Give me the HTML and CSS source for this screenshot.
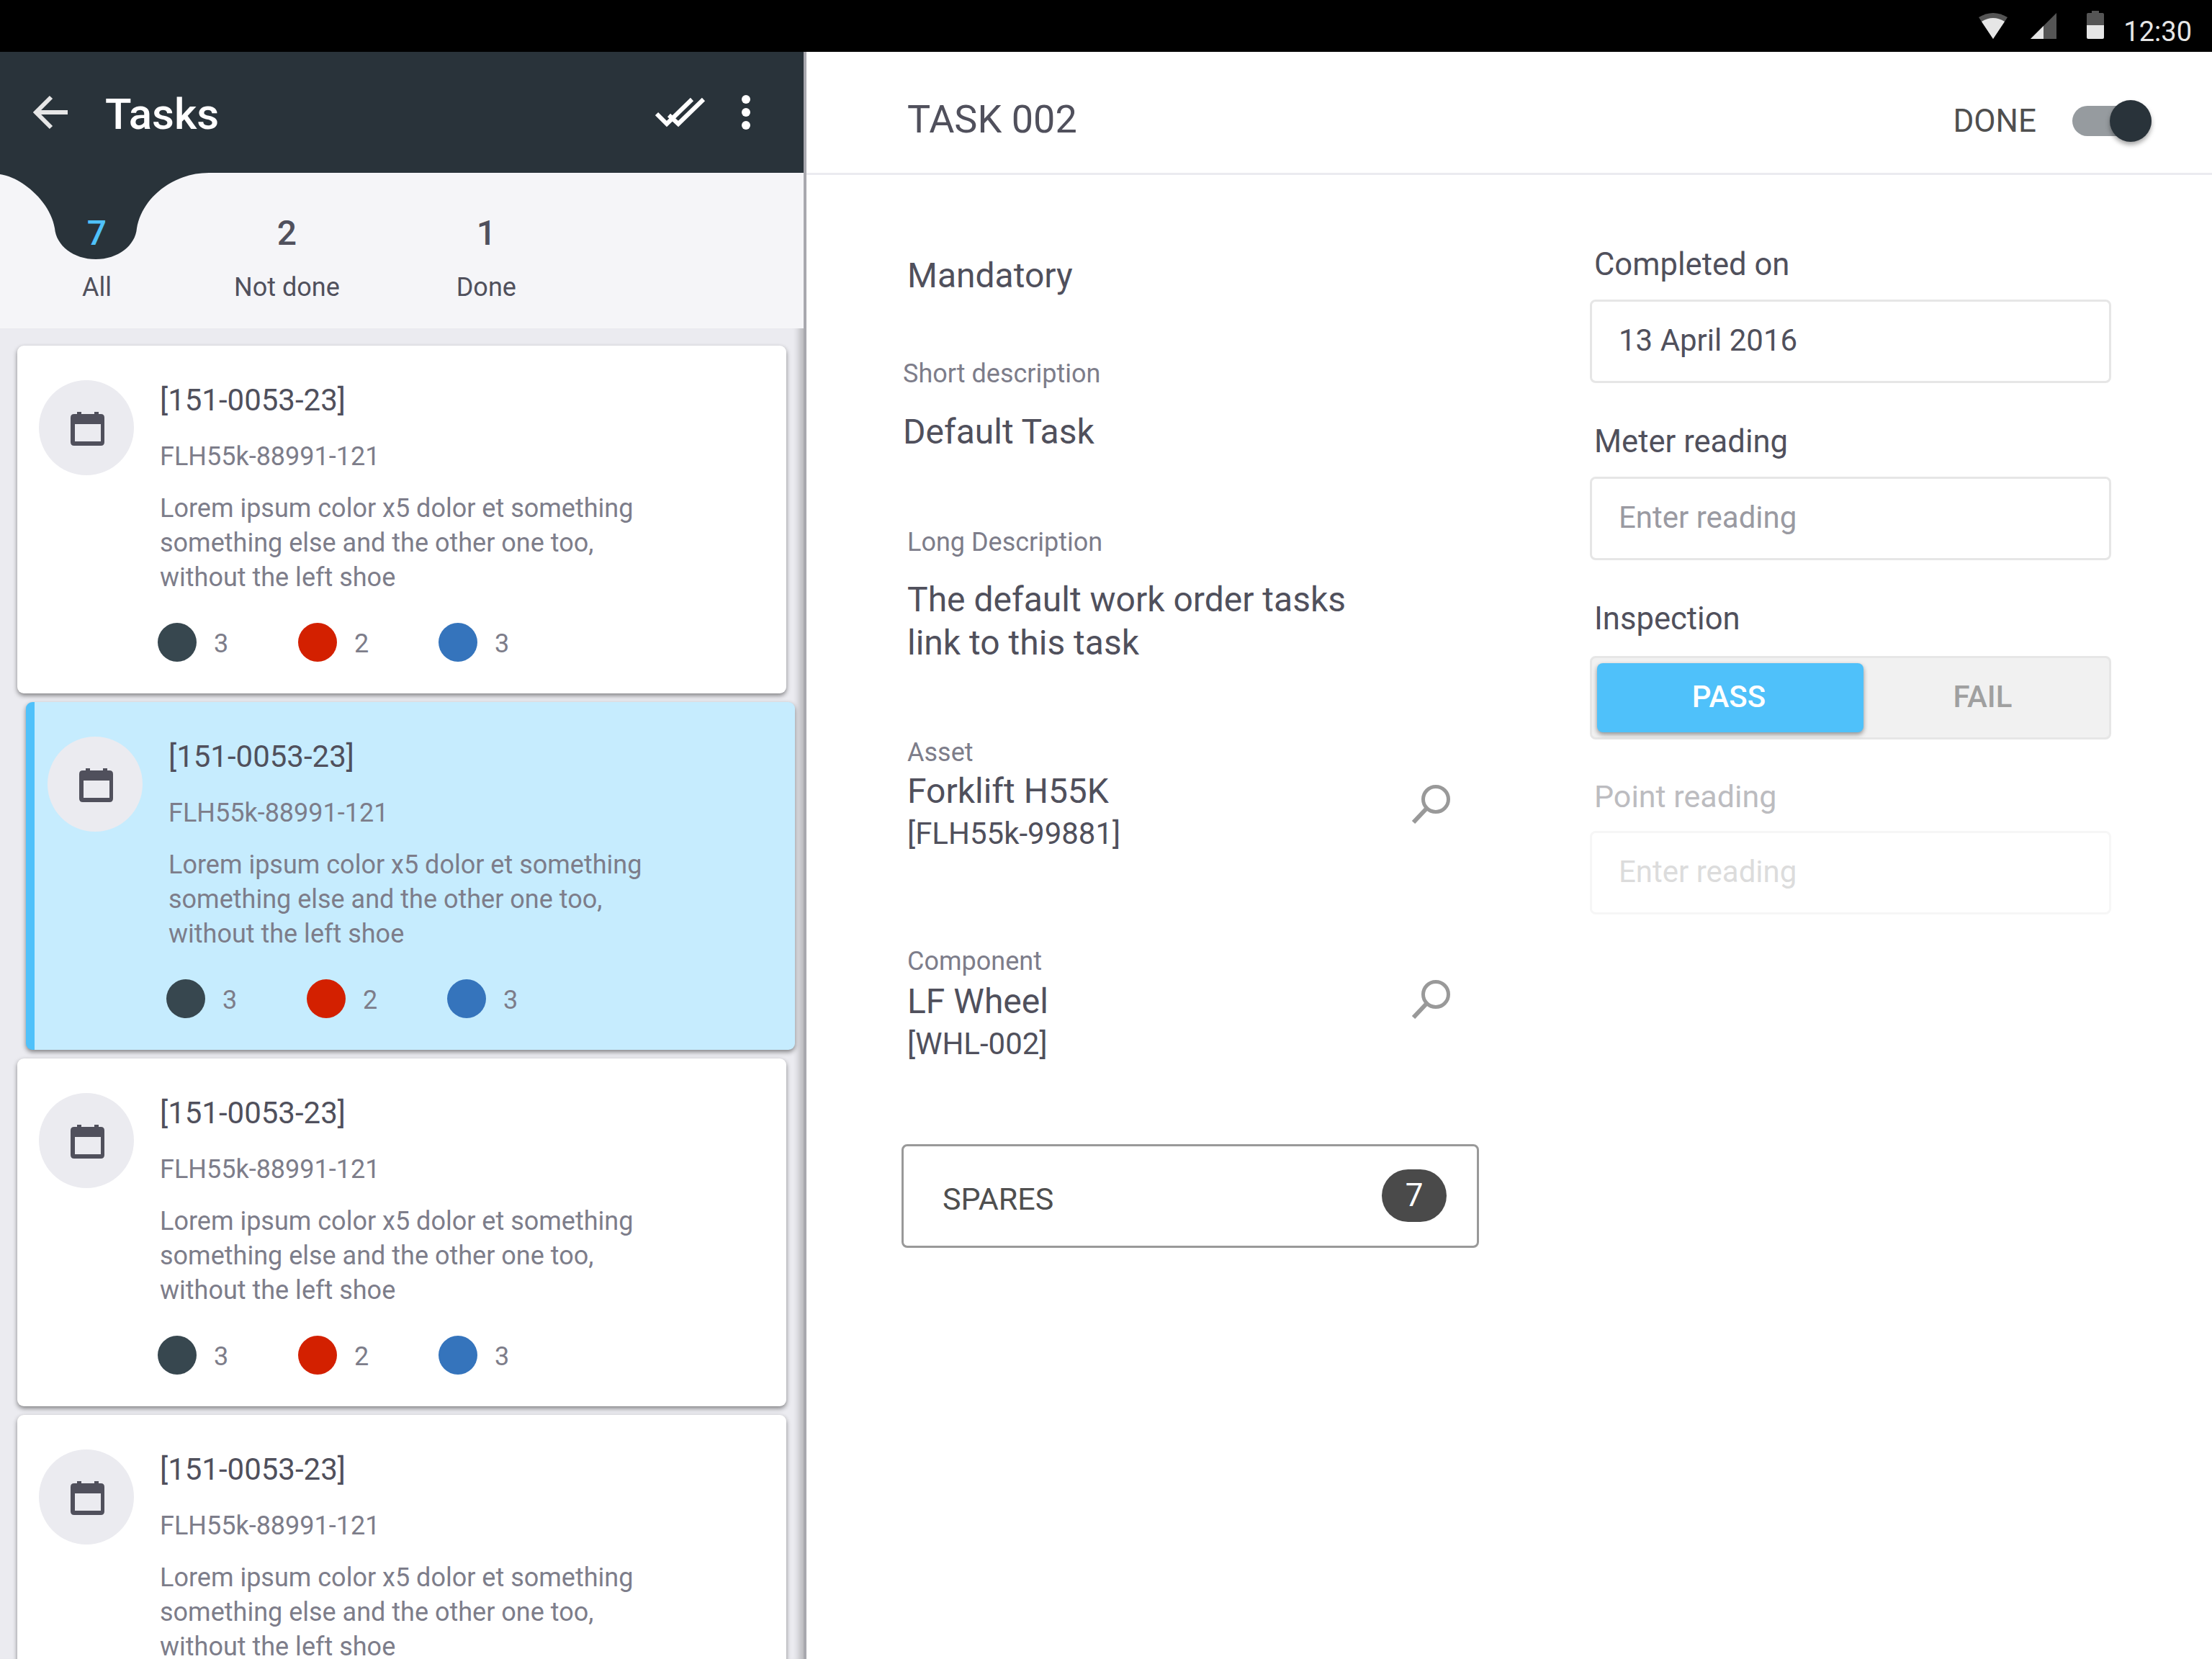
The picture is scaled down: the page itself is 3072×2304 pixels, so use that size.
FILE: index.html
```html
<!DOCTYPE html>
<html lang="en">
<head>
<meta charset="utf-8">
<title>Tasks</title>
<link rel="stylesheet" href="styles.css">
</head>
<body>
<div class="status">
  <svg class="st-wifi" width="40" height="36" viewBox="0 0 40 36"><path d="M0 6 Q20 -6 40 6 L20 36Z" fill="#555"/><path d="M4 12 Q20 2 36 12 L20 36Z" fill="#e6e6e6"/></svg>
  <svg class="st-signal" width="36" height="36" viewBox="0 0 36 36"><path d="M36 0V36H0Z" fill="#555"/><path d="M18 18V36H0Z" fill="#e6e6e6"/></svg>
  <svg class="st-batt" width="24" height="40" viewBox="0 0 24 40"><path d="M7 0H17V3H22Q24 3 24 5V20H0V5Q0 3 2 3H7Z" fill="#555"/><path d="M0 20H24V37Q24 39 22 39H2Q0 39 0 37Z" fill="#e6e6e6"/></svg>
  <span class="st-time">12:30</span>
</div>
<div class="app">
  <aside class="left">
    <header class="lhead">
      <svg class="ic-back" width="48" height="48" viewBox="0 0 48 48"><path d="M48 24H4M25 3L4 24L25 45" fill="none" stroke="#e6e6e6" stroke-width="6"/></svg>
      <h1 class="ltitle">Tasks</h1>
      <svg class="ic-check" width="70" height="42" viewBox="0 0 70 42"><path d="M2 23L16 37L51 3M19 25L32 37L67 3" fill="none" stroke="#fff" stroke-width="6"/></svg>
      <svg class="ic-more" width="12" height="48" viewBox="0 0 12 48"><circle cx="6" cy="6" r="6" fill="#fff"/><circle cx="6" cy="24" r="6" fill="#fff"/><circle cx="6" cy="42" r="6" fill="#fff"/></svg>
    </header>
    <nav class="tabs">
      <svg class="drop" width="290" height="120" viewBox="0 0 290 120"><path d="M0 0H290C240 0 197 35 190 77C188 101 164 120 133 120C102 120 78 101 76 77C70 40 30 6 0 2Z" fill="#29333a"/></svg>
      <div class="tab tab-on"><span class="tnum">7</span><span class="tlab">All</span></div>
      <div class="tab tab-2"><span class="tnum">2</span><span class="tlab">Not done</span></div>
      <div class="tab tab-3"><span class="tnum">1</span><span class="tlab">Done</span></div>
    </nav>
    <div class="list">
      <article class="card">
        <div class="avatar"><svg class="ic-cal" width="47" height="47" viewBox="0 0 47 47"><path fill-rule="evenodd" d="M9 0H15V3H33V0H39V3H42Q47 3 47 8V42Q47 47 42 47H5Q0 47 0 42V8Q0 3 5 3H9ZM6 17V41H42V17Z" fill="#50505c"/></svg></div>
        <div class="cbody">
          <div class="ctitle">[151-0053-23]</div>
          <div class="csub">FLH55k-88991-121</div>
          <p class="cdesc">Lorem ipsum color x5 dolor et something<br>something else and the other one too,<br>without the left shoe</p>
          <div class="cstats">
            <span class="stat"><i class="dot d1"></i>3</span>
            <span class="stat"><i class="dot d2"></i>2</span>
            <span class="stat"><i class="dot d3"></i>3</span>
          </div>
        </div>
      </article>
      <article class="card sel">
        <div class="avatar"><svg class="ic-cal" width="47" height="47" viewBox="0 0 47 47"><path fill-rule="evenodd" d="M9 0H15V3H33V0H39V3H42Q47 3 47 8V42Q47 47 42 47H5Q0 47 0 42V8Q0 3 5 3H9ZM6 17V41H42V17Z" fill="#50505c"/></svg></div>
        <div class="cbody">
          <div class="ctitle">[151-0053-23]</div>
          <div class="csub">FLH55k-88991-121</div>
          <p class="cdesc">Lorem ipsum color x5 dolor et something<br>something else and the other one too,<br>without the left shoe</p>
          <div class="cstats">
            <span class="stat"><i class="dot d1"></i>3</span>
            <span class="stat"><i class="dot d2"></i>2</span>
            <span class="stat"><i class="dot d3"></i>3</span>
          </div>
        </div>
      </article>
      <article class="card">
        <div class="avatar"><svg class="ic-cal" width="47" height="47" viewBox="0 0 47 47"><path fill-rule="evenodd" d="M9 0H15V3H33V0H39V3H42Q47 3 47 8V42Q47 47 42 47H5Q0 47 0 42V8Q0 3 5 3H9ZM6 17V41H42V17Z" fill="#50505c"/></svg></div>
        <div class="cbody">
          <div class="ctitle">[151-0053-23]</div>
          <div class="csub">FLH55k-88991-121</div>
          <p class="cdesc">Lorem ipsum color x5 dolor et something<br>something else and the other one too,<br>without the left shoe</p>
          <div class="cstats">
            <span class="stat"><i class="dot d1"></i>3</span>
            <span class="stat"><i class="dot d2"></i>2</span>
            <span class="stat"><i class="dot d3"></i>3</span>
          </div>
        </div>
      </article>
      <article class="card">
        <div class="avatar"><svg class="ic-cal" width="47" height="47" viewBox="0 0 47 47"><path fill-rule="evenodd" d="M9 0H15V3H33V0H39V3H42Q47 3 47 8V42Q47 47 42 47H5Q0 47 0 42V8Q0 3 5 3H9ZM6 17V41H42V17Z" fill="#50505c"/></svg></div>
        <div class="cbody">
          <div class="ctitle">[151-0053-23]</div>
          <div class="csub">FLH55k-88991-121</div>
          <p class="cdesc">Lorem ipsum color x5 dolor et something<br>something else and the other one too,<br>without the left shoe</p>
        </div>
      </article>
    </div>
  </aside>
  <main class="right">
    <header class="rhead">
      <h2 class="rtitle">TASK 002</h2>
      <span class="done">DONE</span>
      <span class="toggle"><i class="thumb"></i></span>
    </header>
    <div class="form">
      <section class="col-a">
        <h3 class="mand">Mandatory</h3>
        <div class="lab lab-short">Short description</div>
        <div class="val val-short">Default Task</div>
        <div class="lab lab-long">Long Description</div>
        <div class="val val-long">The default work order tasks<br>link to this task</div>
        <div class="lookup">
          <div>
            <div class="lab">Asset</div>
            <div class="val">Forklift H55K</div>
            <div class="code">[FLH55k-99881]</div>
          </div>
          <svg class="ic-search ic-s1" width="54" height="54" viewBox="0 0 54 54"><circle cx="34" cy="20" r="17.5" fill="none" stroke="#999" stroke-width="5"/><path d="M21 33L3 52" fill="none" stroke="#999" stroke-width="6"/></svg>
        </div>
        <div class="lookup lookup-2">
          <div>
            <div class="lab">Component</div>
            <div class="val">LF Wheel</div>
            <div class="code">[WHL-002]</div>
          </div>
          <svg class="ic-search ic-s2" width="54" height="54" viewBox="0 0 54 54"><circle cx="34" cy="20" r="17.5" fill="none" stroke="#999" stroke-width="5"/><path d="M21 33L3 52" fill="none" stroke="#999" stroke-width="6"/></svg>
        </div>
        <div class="spares"><span class="sp-text">SPARES</span><span class="badge">7</span></div>
      </section>
      <section class="col-b">
        <div class="flab">Completed on</div>
        <div class="inp inp-val">13 April 2016</div>
        <div class="flab">Meter reading</div>
        <div class="inp">Enter reading</div>
        <div class="flab">Inspection</div>
        <div class="seg"><span class="seg-on">PASS</span><span class="seg-off">FAIL</span></div>
        <div class="flab flab-dis">Point reading</div>
        <div class="inp inp-dis">Enter reading</div>
      </section>
    </div>
  </main>
</div>
</body>
</html>
```
FILE: styles.css
```css
* { box-sizing: border-box; }
html, body { margin: 0; padding: 0; }
body { width: 3072px; height: 2304px; overflow: hidden; background: #fff; font-family: Roboto, "Liberation Sans", sans-serif; color: #50505c; }
h1, h2, h3, p { margin: 0; font-weight: 400; }

.status { height: 72px; background: #000; display: flex; align-items: flex-start; justify-content: flex-end; padding-right: 28px; }
.st-wifi { margin-top: 18px; }
.st-signal { margin: 18px 0 0 32px; }
.st-batt { margin: 15px 0 0 42px; }
.st-time { margin-left: 27px; font-size: 38px; line-height: 42px; margin-top: 23px; color: #e6e6e6; }

.app { display: flex; height: 2232px; }
.left { width: 1120px; display: flex; flex-direction: column; border-right: 4px solid #a8a8ae; position: relative; }
.lhead { height: 168px; background: #29333a; display: flex; align-items: flex-start; padding: 60px 0 0 46px; flex: none; }
.ic-back { flex: none; }
.ltitle { font-size: 60px; line-height: 70px; color: #fff; font-weight: 500; margin: -8px 0 0 52px; flex: 1; }
.ic-check { margin: 3px 50px 0 0; }
.ic-more { margin: 0 74px 0 0; }

.tabs { height: 216px; flex: none; background: #f5f5f8; position: relative; display: flex; padding-left: 114px; }
.drop { position: absolute; left: 0; top: 0; }
.tab { position: relative; display: flex; flex-direction: column; align-items: center; padding-top: 54px; }
.tab-2 { margin-left: 170px; }
.tab-3 { margin-left: 162px; }
.tnum { font-size: 48px; line-height: 60px; font-weight: 500; }
.tlab { font-size: 36px; line-height: 48px; margin-top: 21px; }
.tab-on .tnum { color: #4fc1fa; }

.list { flex: 1; background: #ebebf0; padding: 24px 0 0 24px; display: flex; flex-direction: column; gap: 12px; overflow: hidden; box-shadow: inset -14px 0 10px -8px rgba(0,0,0,.22); }
.card { width: 1068px; height: 483px; flex: none; background: #fff; border-radius: 9px; box-shadow: 0 3px 6px rgba(0,0,0,.45); display: flex; padding: 48px 0 0 30px; }
.card.sel { margin-left: 12px; background: #c6ecfe; border-left: 12px solid #4fc1fa; padding-left: 18px; }
.avatar { width: 132px; height: 132px; border-radius: 50%; background: #ebebf0; display: flex; align-items: center; justify-content: center; flex: none; }
.ic-cal { margin: 2px 0 0 2px; }
.cbody { margin-left: 36px; margin-top: -2px; }
.ctitle { font-size: 42px; line-height: 60px; color: #50505c; }
.csub { font-size: 36px; line-height: 48px; margin-top: 24px; color: #7d7d8a; }
.cdesc { font-size: 36px; line-height: 48px; margin-top: 24px; color: #7d7d8a; }
.cstats { display: flex; margin: 39px 0 0 -3px; }
.stat { width: 195px; display: flex; align-items: center; font-size: 36px; padding-top: 2px; color: #7d7d8a; }
.dot { width: 54px; height: 54px; border-radius: 50%; margin: -2px 24px 2px 0; flex: none; }
.d1 { background: #37474f; }
.d2 { background: #d32000; }
.d3 { background: #3574bc; }

.right { flex: 1; display: flex; flex-direction: column; min-width: 0; }
.rhead { height: 171px; flex: none; border-bottom: 3px solid #ebebf0; display: flex; align-items: center; padding: 24px 0 0 140px; }
.rtitle { font-size: 54px; flex: 1; color: #50505c; margin-top: -6px; }
.done { font-size: 44px; color: #4f4f4f; margin-right: 50px; }
.toggle { width: 110px; height: 42px; border-radius: 21px; background: #969b9f; position: relative; margin-right: 84px; }
.thumb { position: absolute; right: 0; top: -8px; width: 58px; height: 58px; border-radius: 50%; background: #29333a; box-shadow: 0 4px 6px rgba(0,0,0,.35); }

.form { display: flex; padding-left: 132px; }
.col-a { width: 802px; }
.col-b { width: 724px; margin-left: 154px; padding-top: 95px; }
.mand { font-size: 48px; line-height: 60px; margin: 110px 0 0 8px; }
.lab { font-size: 36px; line-height: 44px; color: #7d7d8a; }
.val { font-size: 48px; line-height: 60px; color: #50505c; }
.lab-short { margin: 84px 0 0 2px; }
.val-short { margin: 29px 0 0 2px; }
.lab-long { margin: 101px 0 0 8px; }
.val-long { margin: 28px 0 0 8px; }
.lookup { display: flex; justify-content: space-between; margin: 100px 0 0 8px; align-items: flex-start; }
.lookup .val { margin-top: 2px; }
.lookup-2 { margin-top: 127px; }
.lookup-2 .val { margin-top: 4px; }
.code { font-size: 42px; line-height: 56px; color: #50505c; margin-top: 1px; }
.ic-search { margin-right: 40px; }
.ic-s1 { margin-top: 67px; }
.ic-s2 { margin-top: 48px; }
.spares { height: 144px; border: 3px solid #999; border-radius: 8px; margin-top: 111px; display: flex; align-items: center; justify-content: space-between; padding: 0 42px 0 54px; font-size: 43px; color: #4f4f4f; }
.sp-text { margin-top: 8px; }
.badge { width: 90px; height: 73px; border-radius: 37px; background: #4a4a4a; color: #fff; display: flex; align-items: center; justify-content: center; font-size: 44px; margin-top: -2px; }

.flab { font-size: 43.6px; line-height: 60px; margin-left: 6px; color: #50505c; }
.inp { height: 116px; border: 3px solid #e6e6e6; border-radius: 8px; margin: 18px 0 52px; padding: 0 0 3px 37px; display: flex; align-items: center; font-size: 42px; color: #9a9aa2; }
.inp-val { color: #50505c; }
.inp-dis { border-color: #f6f6f6; color: #dcdcdc; }
.flab-dis { color: #bcbcc0; font-size: 43px; }
.seg { height: 116px; border: 3px solid #e6e6e6; border-radius: 8px; background: #f1f1f1; margin: 21px 0 49px; padding: 7px 0 7px 7px; display: flex; align-items: stretch; font-size: 42px; font-weight: 500; }
.seg-on { width: 370px; padding: 0 4px 3px 0; background: #4fc1fa; color: #fff; border-radius: 8px; box-shadow: 0 3px 6px rgba(0,0,0,.4); display: flex; align-items: center; justify-content: center; }
.seg-off { flex: 1; padding: 0 10px 3px 0; color: #a0a0a0; display: flex; align-items: center; justify-content: center; }
```
